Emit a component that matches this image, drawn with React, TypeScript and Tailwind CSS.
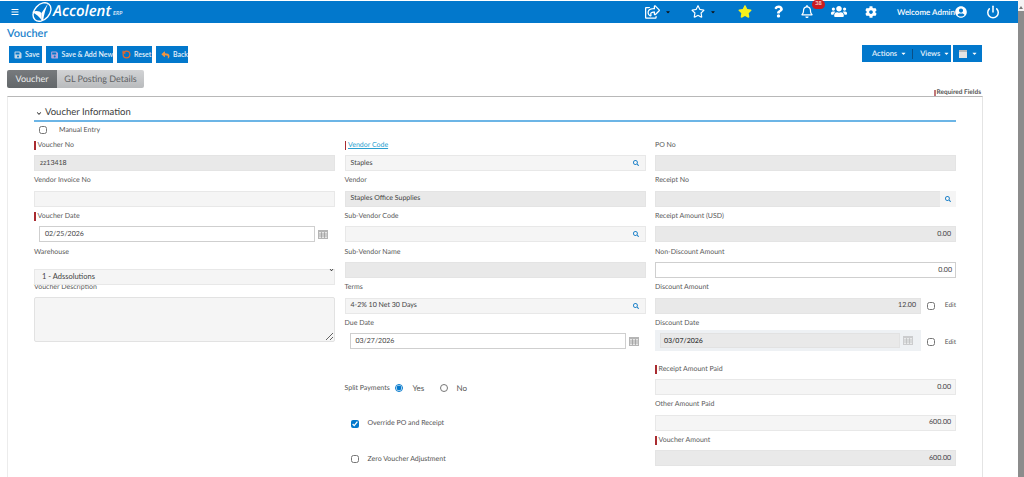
import React from "react";
import {
  FaBars,
  FaCog,
  FaQuestion,
  FaRegBell,
  FaRegShareSquare,
  FaRegStar,
  FaSave,
  FaSearch,
  FaStar,
  FaUserCircle,
  FaUsers,
  FaReply,
  FaCaretDown,
  FaChevronDown,
} from "react-icons/fa";
import { Power, RotateCcw } from "lucide-react";

const font = "font-['Lato',_'Liberation_Sans',_sans-serif] [text-rendering:geometricPrecision]";

// small grey calendar, used by the date fields
function CalendarIcon({ className = "" }: { className?: string }) {
  return (
    <svg viewBox="0 0 10 9" className={`h-[9px] w-[10px] shrink-0 ${className}`}>
      <rect x="0" y="0" width="10" height="9" fill="#b5b5b5" />
      <rect x="1" y="2" width="8" height="6" fill="#e6e6e6" />
      <path d="M3.5 2v6M6.5 2v6M1 4h8M1 6h8" stroke="#8f8f8f" strokeWidth="0.6" />
    </svg>
  );
}

function Logo() {
  return (
    <div className="ml-[12px] flex items-center text-white">
      <svg viewBox="0 0 22 20" className="h-[20px] w-[22px]">
        <ellipse
          cx="11"
          cy="10"
          rx="10.5"
          ry="7.5"
          transform="rotate(-48 11 10)"
          fill="none"
          stroke="white"
          strokeWidth="1.4"
        />
        <path d="M1 10C5 8 9 9 10.5 11L11 19C9 15 5 12 1 10Z" fill="white" />
        <path d="M10.5 11L17 1.5C15 6 13 12 12 19L11 19Z" fill="white" />
      </svg>
      <span className="text-[15px] leading-none font-semibold italic font-['Open_Sans',_sans-serif]">Accolent</span>
      <span className="mt-[5px] ml-[2px] text-[5.5px] leading-none italic">ERP</span>
    </div>
  );
}

function TopBar() {
  return (
    <div className="mt-[1px] flex h-[22px] items-center bg-[#0278cc] text-white">
      <FaBars className="ml-[11px] h-[8px] w-[8px]" />
      <Logo />
      <div className="ml-auto flex items-center">
        <FaRegShareSquare className="h-[14px] w-[15px]" />
        <FaCaretDown className="ml-[5px] h-[6px] w-[6px] text-[#111]" />
        <FaRegStar className="ml-[20px] h-[13px] w-[14px]" />
        <FaCaretDown className="ml-[5px] h-[6px] w-[6px] text-[#111]" />
        <FaStar className="ml-[22px] h-[13px] w-[14px] text-[#f8f01c]" />
        <FaQuestion className="ml-[22px] h-[13px] w-[9px]" />
        <div className="relative ml-[18px]">
          <FaRegBell className="h-[13px] w-[12px]" />
          <span className="absolute top-[-5px] left-[11px] flex h-[9px] w-[13px] items-center justify-center rounded-full bg-[#cc1a1f] text-[5.5px] leading-none">
            38
          </span>
        </div>
        <FaUsers className="ml-[18px] h-[13px] w-[16px]" />
        <FaCog className="ml-[18px] h-[12px] w-[12px]" />
        <span className="ml-[20px] w-[56px] text-[8px] font-semibold whitespace-nowrap">Welcome Admin</span>
        <FaUserCircle className="ml-[2px] h-[12px] w-[12px]" />
        <Power className="mr-[18px] ml-[19px] h-[14px] w-[14px]" strokeWidth={2.6} />
      </div>
    </div>
  );
}

function ToolButton({ icon, label, width }: { icon: React.ReactNode; label: string; width: string }) {
  return (
    <button className={`flex h-[17px] items-center gap-[3px] bg-[#0278cc] pl-[5px] text-[7px] font-semibold whitespace-nowrap text-[#e6f2fb] ${width}`}>
      {icon}
      {label}
    </button>
  );
}

function Toolbar() {
  return (
    <div className="flex items-start justify-between pr-[36px] pl-[9px]">
      <div className="flex gap-[4px] pt-[1px]">
        <ToolButton width="w-[33px]" label="Save" icon={<FaSave className="h-[8px] w-[8px] text-[#c5d6e6]" />} />
        <ToolButton width="w-[67px]" label="Save & Add New" icon={<FaSave className="h-[8px] w-[8px] text-[#b9a5d8]" />} />
        <ToolButton width="w-[35px]" label="Reset" icon={<RotateCcw className="h-[9px] w-[9px] text-[#e8682c]" strokeWidth={3.4} />} />
        <ToolButton width="w-[32px]" label="Back" icon={<FaReply className="h-[8px] w-[9px] text-[#ef9440]" />} />
      </div>
      <div className="flex gap-[2px] text-[7.5px] font-semibold text-[#e6f2fb]">
        <div className="flex h-[17px] w-[89px] items-center bg-[#0278cc] pl-[10px]">
          Actions
          <FaCaretDown className="ml-[3px] h-[7px] w-[7px] text-white" />
          <span className="ml-[5px] h-[10px] w-px bg-[#0a4f86]" />
          <span className="ml-[7px]">Views</span>
          <FaCaretDown className="ml-[3px] h-[7px] w-[7px] text-white" />
        </div>
        <div className="flex h-[17px] w-[29px] items-center bg-[#0278cc] pl-[6px]">
          <svg viewBox="0 0 8 8" className="h-[8px] w-[8px]">
            <rect width="8" height="8" fill="#e4e4e4" />
            <rect width="8" height="2" fill="#b9b9b9" />
          </svg>
          <FaCaretDown className="ml-[4px] h-[7px] w-[7px] text-white" />
        </div>
      </div>
    </div>
  );
}

function Tabs() {
  return (
    <div className="mt-[7px] flex items-end justify-between pr-[37px] pl-[7px]">
      <div className="mb-[8px] flex h-[18px] text-[9px]">
        <div className="flex w-[50px] items-center justify-center rounded-l-[2px] bg-gradient-to-b from-[#777a7d] to-[#63676a] text-[#eceded]">
          Voucher
        </div>
        <div className="flex w-[87px] items-center justify-center rounded-r-[2px] bg-gradient-to-b from-[#d2d3d5] to-[#b9bbbd] text-[#5f6265]">
          GL Posting Details
        </div>
      </div>
      <div className="mb-[-1px] flex items-center text-[6.5px] leading-[8px] font-bold text-[#555]">
        <span className="mr-[1px] h-[7px] w-[2px] bg-[#c0777a]" />
        Required Fields
      </div>
    </div>
  );
}

function Label({ text, required, link }: { text: string; required?: boolean; link?: boolean }) {
  return (
    <div className="flex h-[12px] items-center text-[7px] leading-none text-[#5a5a5a]">
      {required && <span className="mr-[2px] h-[9px] w-[1.5px] bg-[#a92b30]" />}
      <span className={link ? "text-[#2a9fd0] underline" : ""}>{text}</span>
    </div>
  );
}

type BoxKind = "soft" | "grey" | "white";

function Box({
  kind,
  value,
  right,
  lookup,
  className = "",
}: {
  kind: BoxKind;
  value?: string;
  right?: boolean;
  lookup?: boolean;
  className?: string;
}) {
  const look =
    kind === "grey"
      ? "bg-[#e9e9e9] border-[#e4e4e4]"
      : kind === "white"
        ? "bg-white border-[#cfcfcf]"
        : "bg-[#f5f5f5] border-[#e8e8e8]";
  return (
    <div className={`flex h-[16px] min-w-0 flex-1 items-center border pr-[3px] pl-[5px] text-[7px] leading-none text-[#444] ${look} ${right ? "justify-end" : ""} ${className}`}>
      <span className={lookup ? "flex-1" : ""}>{value}</span>
      {lookup && <FaSearch className="mr-[3px] h-[6px] w-[6px] text-[#1d80c8]" />}
    </div>
  );
}

function Field({
  label,
  required,
  link,
  children,
  h = "h-[35.67px]",
}: {
  label: string;
  required?: boolean;
  link?: boolean;
  children: React.ReactNode;
  h?: string;
}) {
  return (
    <div className={h}>
      <Label text={label} required={required} link={link} />
      <div className="mt-[4px] flex items-center">{children}</div>
    </div>
  );
}

function Check({ checked, className = "" }: { checked?: boolean; className?: string }) {
  return (
    <input
      type="checkbox"
      readOnly
      checked={!!checked}
      className={`m-0 h-[8px] w-[8px] shrink-0 accent-[#0278cc] ${className}`}
    />
  );
}

function EditToggle() {
  return (
    <div className="flex w-[35px] shrink-0 items-center justify-end text-[6.5px] text-[#555]">
      <Check className="mr-[10px]" />
      Edit
    </div>
  );
}

function LeftColumn() {
  return (
    <div>
      <Field label="Voucher No" required>
        <Box kind="grey" value="zz13418" />
      </Field>
      <Field label="Vendor Invoice No">
        <Box kind="soft" />
      </Field>
      <Field label="Voucher Date" required>
        <Box kind="white" value="02/25/2026" className="ml-[5px] pl-[3px]" />
        <CalendarIcon className="mr-[7px] ml-[3px]" />
      </Field>
      <Field label="Warehouse">
        <div className="relative w-full">
          <select className="h-[16px] w-full appearance-none border border-[#e8e8e8] bg-[#f5f5f5] pl-[7px] text-[7.5px] text-[#444]">
            <option>1 - Adssolutions</option>
          </select>
          <FaChevronDown className="absolute top-[6px] right-[1px] h-[4px] w-[5px] text-[#222]" />
        </div>
      </Field>
      <Label text="Voucher Description" />
      <textarea
        readOnly
        className="mt-[3px] block h-[45px] w-full rounded-[2px] border border-[#e2e2e2] bg-[#f5f5f5]"
      />
    </div>
  );
}

function MiddleColumn() {
  return (
    <div>
      <Field label="Vendor Code" required link>
        <Box kind="soft" value="Staples" lookup />
      </Field>
      <Field label="Vendor">
        <Box kind="grey" value="Staples Office Supplies" />
      </Field>
      <Field label="Sub-Vendor Code">
        <Box kind="soft" lookup />
      </Field>
      <Field label="Sub-Vendor Name">
        <Box kind="grey" />
      </Field>
      <Field label="Terms">
        <Box kind="soft" value="4-2% 10 Net 30 Days" lookup />
      </Field>
      <Field label="Due Date">
        <Box kind="white" value="03/27/2026" className="ml-[5px] pl-[3px]" />
        <CalendarIcon className="mr-[7px] ml-[3px]" />
      </Field>
      <div className="pt-[17px] text-[7px] text-[#555]">
        <div className="flex h-[35.67px] items-center">
          <span className="w-[50px]">Split Payments</span>
          <input type="radio" readOnly checked className="m-0 h-[8px] w-[8px] accent-[#0278cc]" />
          <span className="ml-[10px] w-[27px] text-[8px]">Yes</span>
          <input type="radio" readOnly checked={false} className="m-0 h-[8px] w-[8px]" />
          <span className="ml-[9px] text-[8px]">No</span>
        </div>
        <div className="flex h-[35.67px] items-center pl-[6px]">
          <Check checked />
          <span className="ml-[9px]">Override PO and Receipt</span>
        </div>
        <div className="flex h-[35.67px] items-center pl-[6px]">
          <Check />
          <span className="ml-[9px]">Zero Voucher Adjustment</span>
        </div>
      </div>
    </div>
  );
}

function RightColumn() {
  return (
    <div>
      <Field label="PO No">
        <Box kind="grey" />
      </Field>
      <Field label="Receipt No">
        <Box kind="grey" className="pr-0" />
        <div className="ml-[-16px] flex h-[16px] w-[16px] shrink-0 items-center justify-center bg-[#f5f5f5]">
          <FaSearch className="h-[6px] w-[6px] text-[#1d80c8]" />
        </div>
      </Field>
      <Field label="Receipt Amount (USD)">
        <Box kind="grey" value="0.00" right className="pr-[4px]" />
      </Field>
      <Field label="Non-Discount Amount">
        <Box kind="white" value="0.00" right />
      </Field>
      <Field label="Discount Amount">
        <Box kind="grey" value="12.00" right className="pr-[4px]" />
        <EditToggle />
      </Field>
      <Field label="Discount Date" h="h-[45.7px]">
        <div className="mt-[-3px] flex h-[21px] flex-1 items-center bg-[#eef1f4] pl-[5px]">
          <div className="flex h-[15px] w-[240px] items-center border border-[#e2e2e2] bg-[#e9e9e9] pl-[3px] text-[7px] font-semibold text-[#444]">
            03/07/2026
          </div>
          <CalendarIcon className="ml-[3px] opacity-60" />
        </div>
        <EditToggle />
      </Field>
      <Field label="Receipt Amount Paid" required>
        <Box kind="soft" value="0.00" right className="pr-[4px]" />
      </Field>
      <Field label="Other Amount Paid">
        <Box kind="soft" value="600.00" right className="pr-[4px]" />
      </Field>
      <Field label="Voucher Amount" required>
        <Box kind="grey" value="600.00" right className="pr-[4px]" />
      </Field>
    </div>
  );
}

function VoucherPanel() {
  return (
    <div className="mr-[35px] ml-[7px] flex-1 border-t border-r border-l border-t-[#b8b8b8] border-r-[#e4e4e4] border-l-[#ececec] pr-[26px] pl-[26px]">
      <div className="flex h-[23px] items-end pb-[3px] pl-[2px] text-[9.5px] leading-none text-[#3c3c3c]">
        <FaChevronDown className="mr-[3px] mb-[1px] h-[5px] w-[6px] text-[#222]" />
        Voucher Information
      </div>
      <div className="h-[2px] bg-[#6cb5e6]" />
      <div className="flex h-[17px] items-center pl-[5px] text-[7px] text-[#555]">
        <Check className="mb-[2px]" />
        <span className="ml-[12px]">Manual Entry</span>
      </div>
      <div className="grid grid-cols-3 gap-x-[9.5px]">
        <LeftColumn />
        <MiddleColumn />
        <RightColumn />
      </div>
    </div>
  );
}

function ScrollBar() {
  return (
    <div className="flex w-[6px] shrink-0 flex-col bg-[#f4f4f4]">
      <div className="flex h-[11px] items-center justify-center pt-[4px]">
        <div className="h-0 w-0 border-r-[2px] border-b-[3px] border-l-[2px] border-r-transparent border-b-[#777] border-l-transparent" />
      </div>
      <div className="flex-1 bg-[#8c8c8c]" />
    </div>
  );
}

export default function App() {
  return (
    <div className={`flex h-screen overflow-hidden bg-white ${font}`}>
      <div className="flex min-w-0 flex-1 flex-col overflow-hidden">
        <TopBar />
        <div className="flex h-[23px] items-center pl-[7px] text-[11px] leading-none font-semibold text-[#1d83cc]">
          Voucher
        </div>
        <Toolbar />
        <Tabs />
        <VoucherPanel />
      </div>
      <ScrollBar />
    </div>
  );
}
